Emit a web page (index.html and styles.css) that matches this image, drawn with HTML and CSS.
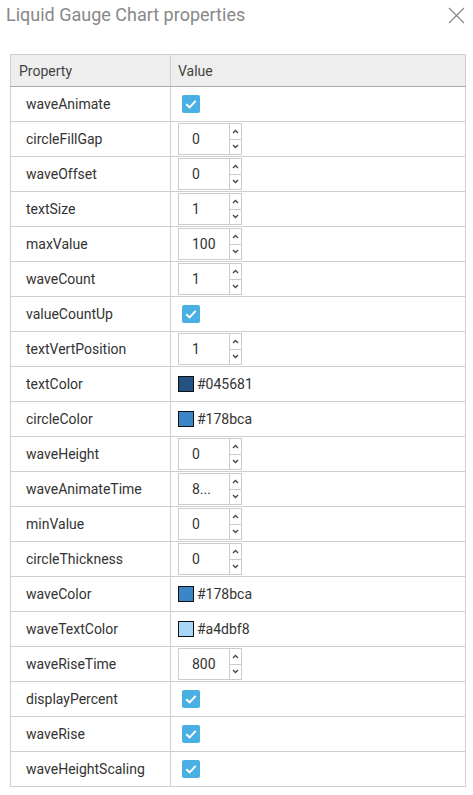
FILE: index.html
```html
<!DOCTYPE html>
<html>
<head>
<meta charset="utf-8">
<link rel="stylesheet" href="styles.css">
</head>
<body>
<div class="dialog">
  <div class="header">
    <div class="title">Liquid Gauge Chart properties</div>
    <svg class="close" width="17" height="17" viewBox="0 0 17 17"><path d="M1 1L16 16M16 1L1 16" stroke="#888" stroke-width="1.2" fill="none"/></svg>
  </div>
  <table class="props">
    <thead>
      <tr><th class="c1">Property</th><th class="c2">Value</th></tr>
    </thead>
    <tbody>
      <tr><td class="c1">waveAnimate</td><td class="c2"><span class="check"><svg width="18" height="18" viewBox="0 0 18 18"><path d="M4.3 9.2L7.6 12.4L13.7 5.9" stroke="#fff" stroke-width="2" fill="none"/></svg></span></td></tr>
      <tr><td class="c1">circleFillGap</td><td class="c2"><span class="spin"><span class="val">0</span><span class="btns"><span class="up"><svg width="7" height="5" viewBox="0 0 7 5"><path d="M1 4L3.5 1.5L6 4" stroke="#444" stroke-width="1.3" fill="none"/></svg></span><span class="dn"><svg width="7" height="5" viewBox="0 0 7 5"><path d="M1 1L3.5 3.5L6 1" stroke="#444" stroke-width="1.3" fill="none"/></svg></span></span></span></td></tr>
      <tr><td class="c1">waveOffset</td><td class="c2"><span class="spin"><span class="val">0</span><span class="btns"><span class="up"><svg width="7" height="5" viewBox="0 0 7 5"><path d="M1 4L3.5 1.5L6 4" stroke="#444" stroke-width="1.3" fill="none"/></svg></span><span class="dn"><svg width="7" height="5" viewBox="0 0 7 5"><path d="M1 1L3.5 3.5L6 1" stroke="#444" stroke-width="1.3" fill="none"/></svg></span></span></span></td></tr>
      <tr><td class="c1">textSize</td><td class="c2"><span class="spin"><span class="val">1</span><span class="btns"><span class="up"><svg width="7" height="5" viewBox="0 0 7 5"><path d="M1 4L3.5 1.5L6 4" stroke="#444" stroke-width="1.3" fill="none"/></svg></span><span class="dn"><svg width="7" height="5" viewBox="0 0 7 5"><path d="M1 1L3.5 3.5L6 1" stroke="#444" stroke-width="1.3" fill="none"/></svg></span></span></span></td></tr>
      <tr><td class="c1">maxValue</td><td class="c2"><span class="spin"><span class="val">100</span><span class="btns"><span class="up"><svg width="7" height="5" viewBox="0 0 7 5"><path d="M1 4L3.5 1.5L6 4" stroke="#444" stroke-width="1.3" fill="none"/></svg></span><span class="dn"><svg width="7" height="5" viewBox="0 0 7 5"><path d="M1 1L3.5 3.5L6 1" stroke="#444" stroke-width="1.3" fill="none"/></svg></span></span></span></td></tr>
      <tr><td class="c1">waveCount</td><td class="c2"><span class="spin"><span class="val">1</span><span class="btns"><span class="up"><svg width="7" height="5" viewBox="0 0 7 5"><path d="M1 4L3.5 1.5L6 4" stroke="#444" stroke-width="1.3" fill="none"/></svg></span><span class="dn"><svg width="7" height="5" viewBox="0 0 7 5"><path d="M1 1L3.5 3.5L6 1" stroke="#444" stroke-width="1.3" fill="none"/></svg></span></span></span></td></tr>
      <tr><td class="c1">valueCountUp</td><td class="c2"><span class="check"><svg width="18" height="18" viewBox="0 0 18 18"><path d="M4.3 9.2L7.6 12.4L13.7 5.9" stroke="#fff" stroke-width="2" fill="none"/></svg></span></td></tr>
      <tr><td class="c1">textVertPosition</td><td class="c2"><span class="spin"><span class="val">1</span><span class="btns"><span class="up"><svg width="7" height="5" viewBox="0 0 7 5"><path d="M1 4L3.5 1.5L6 4" stroke="#444" stroke-width="1.3" fill="none"/></svg></span><span class="dn"><svg width="7" height="5" viewBox="0 0 7 5"><path d="M1 1L3.5 3.5L6 1" stroke="#444" stroke-width="1.3" fill="none"/></svg></span></span></span></td></tr>
      <tr><td class="c1">textColor</td><td class="c2"><span class="color"><span class="sw" style="background:#235381"></span>#045681</span></td></tr>
      <tr><td class="c1">circleColor</td><td class="c2"><span class="color"><span class="sw" style="background:#3a86c8"></span>#178bca</span></td></tr>
      <tr><td class="c1">waveHeight</td><td class="c2"><span class="spin"><span class="val">0</span><span class="btns"><span class="up"><svg width="7" height="5" viewBox="0 0 7 5"><path d="M1 4L3.5 1.5L6 4" stroke="#444" stroke-width="1.3" fill="none"/></svg></span><span class="dn"><svg width="7" height="5" viewBox="0 0 7 5"><path d="M1 1L3.5 3.5L6 1" stroke="#444" stroke-width="1.3" fill="none"/></svg></span></span></span></td></tr>
      <tr><td class="c1">waveAnimateTime</td><td class="c2"><span class="spin"><span class="val">8...</span><span class="btns"><span class="up"><svg width="7" height="5" viewBox="0 0 7 5"><path d="M1 4L3.5 1.5L6 4" stroke="#444" stroke-width="1.3" fill="none"/></svg></span><span class="dn"><svg width="7" height="5" viewBox="0 0 7 5"><path d="M1 1L3.5 3.5L6 1" stroke="#444" stroke-width="1.3" fill="none"/></svg></span></span></span></td></tr>
      <tr><td class="c1">minValue</td><td class="c2"><span class="spin"><span class="val">0</span><span class="btns"><span class="up"><svg width="7" height="5" viewBox="0 0 7 5"><path d="M1 4L3.5 1.5L6 4" stroke="#444" stroke-width="1.3" fill="none"/></svg></span><span class="dn"><svg width="7" height="5" viewBox="0 0 7 5"><path d="M1 1L3.5 3.5L6 1" stroke="#444" stroke-width="1.3" fill="none"/></svg></span></span></span></td></tr>
      <tr><td class="c1">circleThickness</td><td class="c2"><span class="spin"><span class="val">0</span><span class="btns"><span class="up"><svg width="7" height="5" viewBox="0 0 7 5"><path d="M1 4L3.5 1.5L6 4" stroke="#444" stroke-width="1.3" fill="none"/></svg></span><span class="dn"><svg width="7" height="5" viewBox="0 0 7 5"><path d="M1 1L3.5 3.5L6 1" stroke="#444" stroke-width="1.3" fill="none"/></svg></span></span></span></td></tr>
      <tr><td class="c1">waveColor</td><td class="c2"><span class="color"><span class="sw" style="background:#3a86c8"></span>#178bca</span></td></tr>
      <tr><td class="c1">waveTextColor</td><td class="c2"><span class="color"><span class="sw" style="background:#a9d5f7"></span>#a4dbf8</span></td></tr>
      <tr><td class="c1">waveRiseTime</td><td class="c2"><span class="spin"><span class="val">800</span><span class="btns"><span class="up"><svg width="7" height="5" viewBox="0 0 7 5"><path d="M1 4L3.5 1.5L6 4" stroke="#444" stroke-width="1.3" fill="none"/></svg></span><span class="dn"><svg width="7" height="5" viewBox="0 0 7 5"><path d="M1 1L3.5 3.5L6 1" stroke="#444" stroke-width="1.3" fill="none"/></svg></span></span></span></td></tr>
      <tr><td class="c1">displayPercent</td><td class="c2"><span class="check"><svg width="18" height="18" viewBox="0 0 18 18"><path d="M4.3 9.2L7.6 12.4L13.7 5.9" stroke="#fff" stroke-width="2" fill="none"/></svg></span></td></tr>
      <tr><td class="c1">waveRise</td><td class="c2"><span class="check"><svg width="18" height="18" viewBox="0 0 18 18"><path d="M4.3 9.2L7.6 12.4L13.7 5.9" stroke="#fff" stroke-width="2" fill="none"/></svg></span></td></tr>
      <tr><td class="c1">waveHeightScaling</td><td class="c2"><span class="check"><svg width="18" height="18" viewBox="0 0 18 18"><path d="M4.3 9.2L7.6 12.4L13.7 5.9" stroke="#fff" stroke-width="2" fill="none"/></svg></span></td></tr>
    </tbody>
  </table>
</div>
</body>
</html>
```
FILE: styles.css
```css
* { box-sizing: border-box; }
html, body { margin: 0; padding: 0; background: #fff; }
body { font-family: Roboto, "Liberation Sans", sans-serif; color: #333; }
.dialog { width: 473px; padding: 0 7px 0 10px; }
.header { display: flex; justify-content: space-between; align-items: flex-start; height: 54px; margin-left: -4px; }
.title { font-size: 18px; color: #888; padding-top: 4px; line-height: 22px; }
.close { margin-top: 7px; margin-right: 1px; }
.props { width: 456px; border-collapse: collapse; border: 1px solid #cfcfcf; font-size: 14px; }
.props th { background: #eeeeee; font-weight: normal; text-align: left; height: 32px; padding: 0 0 0 8px; border-bottom: 1px solid #aaa; color: #444; }
.props th.c1 { width: 160px; border-right: 1px solid #cfcfcf; }
.props th.c2 { padding-left: 7px; }
.props td { height: 35px; border-bottom: 1px solid #cfcfcf; padding: 0; vertical-align: middle; }
.props td.c1 { padding-left: 15px; border-right: 1px solid #cfcfcf; color: #333; }
.props td.c2 { padding-left: 7px; }
.check { display: block; width: 18px; height: 18px; margin-left: 4px; background: #4ab0e4; border-radius: 2px; }
.check svg { display: block; }
.spin { display: flex; width: 64px; height: 32px; border: 1px solid #ccc; }
.val { flex: 1; padding-left: 13px; line-height: 30px; font-size: 14px; color: #333; }
.btns { width: 12px; border-left: 1px solid #ccc; display: flex; flex-direction: column; }
.up, .dn { flex: 1; display: flex; align-items: center; justify-content: center; }
.up { border-bottom: 1px solid #ccc; }
.up svg, .dn svg { display: block; }
.color { display: flex; align-items: center; font-size: 14px; color: #333; }
.sw { width: 16px; height: 16px; border: 1px solid #111; margin-right: 3px; }
```
